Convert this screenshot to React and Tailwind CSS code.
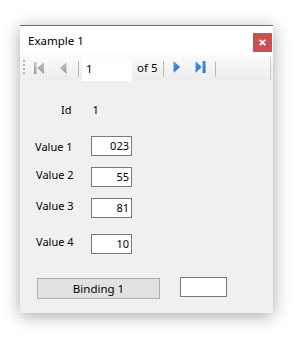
import React from "react";

const font = { fontFamily: '"Segoe UI", "Noto Sans", sans-serif' };

function First() {
  return (
    <svg width="11" height="13" viewBox="0 0 11 13">
      <defs>
        <linearGradient id="g1" x1="0" y1="0" x2="0" y2="1">
          <stop offset="0" stopColor="#c4c4c4" />
          <stop offset="1" stopColor="#9a9a9a" />
        </linearGradient>
      </defs>
      <rect x="0" y="0" width="2.5" height="12" fill="url(#g1)" />
      <polygon points="3,6 10,0 10,12" fill="url(#g1)" />
    </svg>
  );
}
function Prev() {
  return (
    <svg width="7" height="13" viewBox="0 0 7 13">
      <defs>
        <linearGradient id="g2" x1="0" y1="0" x2="0" y2="1">
          <stop offset="0" stopColor="#c4c4c4" />
          <stop offset="1" stopColor="#9a9a9a" />
        </linearGradient>
      </defs>
      <polygon points="0,6 6.5,0 6.5,12" fill="url(#g2)" />
    </svg>
  );
}
function Next() {
  return (
    <svg width="8" height="13" viewBox="0 0 8 13">
      <defs>
        <linearGradient id="g3" x1="0" y1="0" x2="1" y2="1">
          <stop offset="0" stopColor="#5b9bf5" />
          <stop offset="1" stopColor="#1f5fc8" />
        </linearGradient>
      </defs>
      <polygon points="0.5,0 7,6 0.5,12" fill="url(#g3)" />
    </svg>
  );
}
function Last() {
  return (
    <svg width="11" height="13" viewBox="0 0 11 13">
      <defs>
        <linearGradient id="g4" x1="0" y1="0" x2="1" y2="1">
          <stop offset="0" stopColor="#5b9bf5" />
          <stop offset="1" stopColor="#1f5fc8" />
        </linearGradient>
      </defs>
      <polygon points="0.5,0 6.5,6 0.5,12" fill="url(#g4)" />
      <rect x="7.5" y="0" width="3" height="12" fill="url(#g4)" />
    </svg>
  );
}

function Sep({ ml }) {
  return <div className={`w-px h-[16px] bg-[#b8b8b8] ${ml}`} />;
}

function Field({ value, w = "w-[41px]" }) {
  return (
    <div className={`${w} h-[20px] border border-[#7a7a7a] bg-white flex items-center justify-end pr-[2px] text-[11px] text-black`}>
      {value}
    </div>
  );
}

function Row({ label, value, mt, lpt, lpl }) {
  return (
    <div className={`flex items-start ${mt}`}>
      <div className={`w-[71px] ${lpl} ${lpt} text-[11px] leading-[13px] text-black`}>{label}</div>
      <Field value={value} />
    </div>
  );
}

export default function App() {
  return (
    <div className="w-[298px] h-[348px] bg-white pt-[25px] pl-[20px]" style={font}>
      <div className="w-[253px] border-t border-[#707070] shadow-[0_3px_16px_rgba(0,0,0,0.35)] bg-white">
        {/* title bar */}
        <div className="h-[28px] flex items-start bg-white">
          <div className="ml-[8px] mt-[8px] text-[11.5px] leading-[14px] text-black">Example 1</div>
          <div className="ml-auto mr-[1px] mt-[7px] w-[19px] h-[19px] bg-[#c75050] flex items-center justify-center">
            <svg width="7" height="7" viewBox="0 0 7 7">
              <path d="M0.8 0.8 L6.2 6.2 M6.2 0.8 L0.8 6.2" stroke="white" strokeWidth="1.8" />
            </svg>
          </div>
        </div>
        {/* toolbar */}
        <div className="h-[27px] flex items-start bg-gradient-to-b from-[#fcfcfc] to-[#ececec]">
          <div className="ml-[3px] mt-[6px] flex flex-col gap-[2px]">
            <div className="w-[2px] h-[2px] bg-[#b4b4b4]" />
            <div className="w-[2px] h-[2px] bg-[#b4b4b4]" />
            <div className="w-[2px] h-[2px] bg-[#b4b4b4]" />
            <div className="w-[2px] h-[2px] bg-[#b4b4b4]" />
          </div>
          <div className="ml-[9px] mt-[8px]"><First /></div>
          <div className="ml-[15px] mt-[8px]"><Prev /></div>
          <div className="ml-[11px] mt-[7px]"><Sep ml="" /></div>
          <div className="ml-[3px] mt-[3px] w-[50px] h-[24px] bg-white flex items-center pl-[4px] text-[11.5px] text-black">1</div>
          <div className="ml-[5px] mt-[7px] text-[11.5px] leading-[14px] text-black">of 5</div>
          <div className="ml-[6px] mt-[7px]"><Sep ml="" /></div>
          <div className="ml-[9px] mt-[7px]"><Next /></div>
          <div className="ml-[14px] mt-[7px]"><Last /></div>
          <div className="ml-[9px] mt-[7px]"><Sep ml="" /></div>
          <div className="ml-auto mr-[2px] mt-[3px] w-px h-[23px] bg-[#c8c8c8]" />
        </div>
        {/* content */}
        <div className="h-[232px] bg-[#f0f0f0] flex flex-col">
          <div className="mt-[19px] h-[20px] flex items-center text-[11px] text-black">
            <div className="ml-[41px]">Id</div>
            <div className="ml-[21px]">1</div>
          </div>
          <Row label="Value 1" value="023" mt="mt-[16px]" lpt="pt-[4px]" lpl="pl-[15px]" />
          <Row label="Value 2" value="55" mt="mt-[11px]" lpt="pt-[1px]" lpl="pl-[16px]" />
          <Row label="Value 3" value="81" mt="mt-[11px]" lpt="pt-[1px]" lpl="pl-[16px]" />
          <Row label="Value 4" value="10" mt="mt-[16px]" lpt="pt-[1px]" lpl="pl-[16px]" />
          <div className="mt-[23px] flex items-start">
            <div className="ml-[17px] mt-[1px] w-[123px] h-[21px] bg-[#e1e1e1] border border-[#adadad] flex items-center justify-center text-[11.5px] text-black">
              Binding 1
            </div>
            <div className="ml-[20px] w-[47px] h-[20px] border border-[#7a7a7a] bg-white" />
          </div>
        </div>
      </div>
    </div>
  );
}
